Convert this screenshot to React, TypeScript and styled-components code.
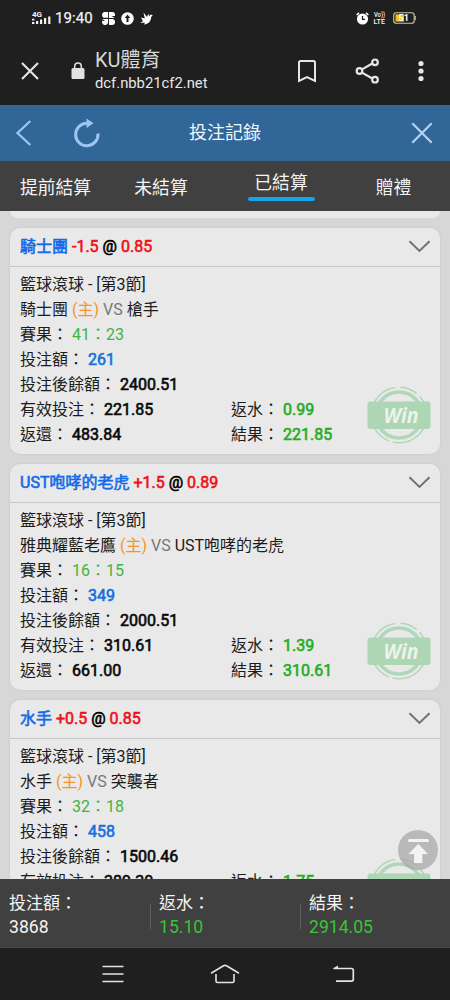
import React from "react";
import styled, { createGlobalStyle } from "styled-components";

const GlobalStyle = createGlobalStyle`
  *, *::before, *::after { box-sizing: border-box; }
  body { margin: 0; background: #1f1f1f; font-family: Roboto, "Noto Sans CJK TC", sans-serif; }
  svg { display: block; flex: none; }
`;

const Screen = styled.div`
  width: 450px;
  height: 1000px;
  display: flex;
  flex-direction: column;
  overflow: hidden;
  background: #1f1f1f;
`;

const StatusBar = styled.div`
  height: 36px;
  display: flex;
  align-items: center;
  padding: 0 33px 0 31px;
  color: #f2f2f2;
`;

const Signal = styled.div`
  width: 21px;
  margin-right: 3px;
`;

const Clock = styled.span`
  font-size: 15px;
  line-height: 18px;
  letter-spacing: 0.1px;
  -webkit-text-stroke: 0.25px #f2f2f2;
  margin-right: 9px;
`;

const StatusIcons = styled.div<{ $gap: number }>`
  display: flex;
  align-items: center;
  gap: ${(p) => p.$gap}px;
`;

const Spacer = styled.div`
  flex: 1;
`;

const BrowserBar = styled.div`
  height: 69px;
  display: flex;
  align-items: center;
  padding: 0 21px;
`;

const LockSlot = styled.div`
  margin-left: 32px;
`;

const Site = styled.div`
  margin-left: 10px;
  flex: 1;
`;

const SiteTitle = styled.div`
  font-size: 20px;
  line-height: 25px;
  color: #d6d6d6;
`;

const SiteHost = styled.div`
  font-size: 14.8px;
  line-height: 20px;
  color: #e6e6e6;
`;

const BrowserActions = styled.div`
  display: grid;
  grid-template-columns: 58px 58px 16px;
  align-items: center;
  column-gap: 0;
  padding-left: 0;
`;

const PageHeader = styled.header`
  height: 56px;
  display: grid;
  grid-template-columns: 115px 1fr 115px;
  align-items: center;
  background: #316698;
`;

const HeaderSide = styled.div<{ $end?: boolean }>`
  display: flex;
  align-items: center;
  gap: 41px;
  justify-content: ${(p) => (p.$end ? "flex-end" : "flex-start")};
  padding: ${(p) => (p.$end ? "0 17px 0 0" : "0 0 0 15px")};
`;

const PageTitle = styled.h1`
  margin: 0;
  font-size: 18px;
  font-weight: 400;
  line-height: 26px;
  text-align: center;
  color: #f1f6fb;
`;

const Tabs = styled.nav`
  height: 50px;
  display: grid;
  grid-template-columns: 111px 100px 140px 85px;
  background: #404040;
`;

const Tab = styled.div<{ $active?: boolean }>`
  display: flex;
  flex-direction: column;
  align-items: center;
  padding-top: ${(p) => (p.$active ? 9 : 14)}px;
  font-size: 17.8px;
  line-height: 26px;
  color: #f4f4f4;

  &::after {
    content: "";
    display: ${(p) => (p.$active ? "block" : "none")};
    width: 67px;
    height: 4px;
    margin-top: 1px;
    border-radius: 2px;
    background: #12a5e8;
  }
`;

const List = styled.main`
  height: 668px;
  position: relative;
  overflow: hidden;
  background: #d7d7d7;
  padding: 0 10px;
`;

const CardTail = styled.div`
  height: 7px;
  margin-bottom: 10px;
  background: #e9e9e9;
  border-radius: 0 0 9px 9px;
`;

const Card = styled.section`
  position: relative;
  height: 226px;
  margin-bottom: 10px;
  background: #e9e9e9;
  border-radius: 10px;
  box-shadow: 0 0 3px rgba(0, 0, 0, 0.07);
`;

const CardHeader = styled.div`
  height: 39px;
  display: flex;
  align-items: center;
  justify-content: space-between;
  padding: 0 9px 1px 10px;
  border-bottom: 1px solid #c8c8c8;
`;

const Pick = styled.div`
  font-size: 16px;
  line-height: 25px;
  color: #000;
  -webkit-text-stroke-width: 0.6px;
`;

const Team = styled.span`
  color: #126be8;
`;

const Red = styled.span`
  color: #f01018;
`;

const CardBody = styled.div`
  padding: 5px 10px;
`;

const Line = styled.div`
  display: grid;
  grid-template-columns: 211px 1fr;
  height: 25px;
  font-size: 16px;
  line-height: 25px;
  white-space: nowrap;
  color: #1c1c1c;
`;

type Tone = "black" | "blue" | "green" | "score" | "home" | "versus";
const tones: Record<Tone, string> = {
  black: "#080808",
  blue: "#176fe0",
  green: "#24ae24",
  score: "#3eb53e",
  home: "#f79422",
  versus: "#777",
};

const Value = styled.span<{ $tone: Tone; $strong?: boolean }>`
  color: ${(p) => tones[p.$tone]};
  -webkit-text-stroke-width: ${(p) => (p.$strong ? "0.6px" : "0")};
`;

const StampSlot = styled.div`
  position: absolute;
  right: 9px;
  bottom: 10px;
`;

const TopButton = styled.div`
  position: absolute;
  right: 12px;
  top: 619px;
  width: 40px;
  height: 40px;
  border-radius: 50%;
  background: rgba(166, 166, 166, 0.72);
`;

const Totals = styled.footer`
  height: 69px;
  display: grid;
  grid-template-columns: repeat(3, 150px);
  background: #404040;
  border-bottom: 1px solid #494949;
`;

const Total = styled.div<{ $green?: boolean }>`
  position: relative;
  padding: 12px 0 0 9px;
  font-size: 17px;
  line-height: 24px;
  color: #f4f4f4;

  & > strong {
    display: block;
    font-weight: 400;
    font-size: 17.6px;
    color: ${(p) => (p.$green ? "#35c735" : "#f4f4f4")};
  }

  &:not(:first-child)::before {
    content: "";
    position: absolute;
    left: 0;
    top: 25px;
    width: 1px;
    height: 25px;
    background: #606060;
  }
`;

const SystemNav = styled.div`
  height: 52px;
  display: flex;
  align-items: center;
  justify-content: space-between;
  padding: 0 95px 0 102px;
`;

const HomeSlot = styled.div`
  margin-right: 6px;
`;

const WinStamp = () => (
  <svg width="64" height="58" viewBox="0 0 64 58">
    <g fill="none" stroke="#b0d8b8">
      <circle cx="32" cy="29" r="23" strokeWidth="3.6" />
      <circle cx="32" cy="29" r="27.8" strokeWidth="1.5" strokeDasharray="58 4 20 3 50 5 18 4" strokeDashoffset="8" />
    </g>
    <rect x="0.5" y="15.5" width="63" height="27.5" rx="3" fill="#acd6b4" />
    <text x="34" y="37" textAnchor="middle" fontFamily="Open Sans, sans-serif" fontWeight="700" fontStyle="italic" fontSize="21.5" fill="#ecf2ec" textLength="35" lengthAdjust="spacingAndGlyphs">
      Win
    </text>
  </svg>
);

interface Bet {
  team: string;
  handicap: string;
  odds: string;
  home: string;
  away: string;
  score: string;
  stake: string;
  balance: string;
  valid: string;
  rebate: string;
  returned: string;
  result: string;
}

const bets: Bet[] = [
  { team: "騎士團", handicap: "-1.5", odds: "0.85", home: "騎士團", away: "槍手", score: "41：23", stake: "261", balance: "2400.51", valid: "221.85", rebate: "0.99", returned: "483.84", result: "221.85" },
  { team: "UST咆哮的老虎", handicap: "+1.5", odds: "0.89", home: "雅典耀藍老鷹", away: "UST咆哮的老虎", score: "16：15", stake: "349", balance: "2000.51", valid: "310.61", rebate: "1.39", returned: "661.00", result: "310.61" },
  { team: "水手", handicap: "+0.5", odds: "0.85", home: "水手", away: "突襲者", score: "32：18", stake: "458", balance: "1500.46", valid: "389.30", rebate: "1.75", returned: "847.30", result: "389.30" },
];

const BetCard = ({ bet }: { bet: Bet }) => (
  <Card>
    <CardHeader>
      <Pick>
        <Team>{bet.team}</Team> <Red>{bet.handicap}</Red> @ <Red>{bet.odds}</Red>
      </Pick>
      <svg width="23" height="13" viewBox="0 0 23 13" fill="none" stroke="#707070" strokeWidth="1.9">
        <path d="M1.5 1.2 11.5 11 21.5 1.2" />
      </svg>
    </CardHeader>
    <CardBody>
      <Line><span>籃球滾球 - [第3節]</span></Line>
      <Line>
        <span>
          {bet.home} <Value $tone="home">(主)</Value> <Value $tone="versus">VS</Value> {bet.away}
        </span>
      </Line>
      <Line><span>賽果： <Value $tone="score">{bet.score}</Value></span></Line>
      <Line><span>投注額： <Value $tone="blue" $strong>{bet.stake}</Value></span></Line>
      <Line><span>投注後餘額： <Value $tone="black" $strong>{bet.balance}</Value></span></Line>
      <Line>
        <span>有效投注： <Value $tone="black" $strong>{bet.valid}</Value></span>
        <span>返水： <Value $tone="green" $strong>{bet.rebate}</Value></span>
      </Line>
      <Line>
        <span>返還： <Value $tone="black" $strong>{bet.returned}</Value></span>
        <span>結果： <Value $tone="green" $strong>{bet.result}</Value></span>
      </Line>
    </CardBody>
    <StampSlot><WinStamp /></StampSlot>
  </Card>
);

export default function App() {
  return (
    <Screen>
      <GlobalStyle />
      <StatusBar>
        <Signal>
          <svg width="21" height="14" viewBox="0 0 21 14" fill="#f2f2f2">
            <text x="1" y="6.3" fontSize="8" fontWeight="700" fontFamily="Roboto">4G</text>
            <path d="M1 7.8h2.4v1.6H1zM1 11h2.4v2H1zM5 10h2.2v3H5zM9 8.5h2.2V13H9zM13 7h2.2v6H13zM17.2 5.5h2.2V13h-2.2z" />
          </svg>
        </Signal>
        <Clock>19:40</Clock>
        <StatusIcons $gap={6}>
          <svg width="13" height="13" viewBox="0 0 13 13" fill="#fff">
            <path d="M3 0h3.1v5.8H3A2.9 2.9 0 0 1 3 0zM7 0h2.8A3 3 0 0 1 13 3v1H9.5l3.2 2H7zM0 7h6.1v3A3 3 0 0 1 0 10V9h3.3zM7 7h3a3 3 0 0 1 0 6H7z" />
          </svg>
          <svg width="13" height="13" viewBox="0 0 13 13">
            <circle cx="6.5" cy="6.5" r="6.3" fill="#fff" />
            <path d="M6.5 2.5 9.3 6H7.5v4h-2V6H3.7z" fill="#1f1f1f" />
          </svg>
          <svg width="13" height="13" viewBox="0 0 13 13" fill="#fff">
            <path d="M3.5.5 7 5 8.3 1.8 9.2 4.2 10.7 2.5 12.8 3.2 11.3 4.8C11 9 8.6 12.4 4 12.4L5 10.8 0 10.7 3 9.2 1 5.5 4.8 6.5z" />
          </svg>
        </StatusIcons>
        <Spacer />
        <StatusIcons $gap={4}>
          <svg width="13" height="13" viewBox="0 0 13 13">
            <circle cx="6.5" cy="7" r="5.6" fill="#fff" />
            <path d="M.6 3 3 .9M12.4 3 10 .9" stroke="#fff" strokeWidth="1.5" />
            <path d="M6.5 4v3.3H9" fill="none" stroke="#1f1f1f" strokeWidth="1.3" />
          </svg>
          <svg width="13" height="14" viewBox="0 0 13 14" fill="#f2f2f2" fontFamily="Roboto" fontWeight="500">
            <text x="1" y="6" fontSize="6.5" textLength="11" lengthAdjust="spacingAndGlyphs">Vo))</text>
            <text x="0.5" y="13" fontSize="8" textLength="11.5" lengthAdjust="spacingAndGlyphs">LTE</text>
          </svg>
          <svg width="27" height="12" viewBox="0 0 27 12">
            <rect x="3.7" y="0.7" width="20.5" height="10.6" rx="2.6" fill="none" stroke="#d0c6a8" strokeWidth="1.1" />
            <rect x="5.5" y="2.4" width="8.5" height="7.2" fill="#f4bd20" />
            <path d="M25.3 4v4" stroke="#d0c6a8" />
            <text x="13.7" y="9.2" textAnchor="middle" fontFamily="Roboto" fontWeight="700" fontSize="9" fill="#fff">51</text>
          </svg>
        </StatusIcons>
      </StatusBar>
      <BrowserBar>
        <svg width="18" height="18" viewBox="0 0 18 18" stroke="#e6e6e6" strokeWidth="2.1">
          <path d="M1 1 17 17M17 1 1 17" />
        </svg>
        <LockSlot>
          <svg width="14" height="18" viewBox="0 0 14 18">
            <rect x="0.5" y="6" width="13" height="11" rx="1.5" fill="#e2e2e2" />
            <path d="M3.7 7V4.4a3.3 3.3 0 0 1 6.6 0V7" fill="none" stroke="#e2e2e2" strokeWidth="1.5" />
          </svg>
        </LockSlot>
        <Site>
          <SiteTitle>KU體育</SiteTitle>
          <SiteHost>dcf.nbb21cf2.net</SiteHost>
        </Site>
        <BrowserActions>
          <svg width="20" height="24" viewBox="0 0 20 24" fill="none" stroke="#e6e6e6" strokeWidth="2">
            <path d="M2 22V3.5A1.5 1.5 0 0 1 3.5 2h13A1.5 1.5 0 0 1 18 3.5V22L10 18.2z" />
          </svg>
          <svg width="26" height="26" viewBox="0 0 26 26" fill="none" stroke="#e6e6e6" strokeWidth="2.2">
            <path d="M7 11.4 17.3 5.5M7 14.6 17.3 20.5" />
            <circle cx="4.5" cy="13" r="2.8" />
            <circle cx="20" cy="4.3" r="2.8" />
            <circle cx="20" cy="21.7" r="2.8" />
          </svg>
          <svg width="16" height="22" viewBox="0 0 16 22" fill="#e6e6e6">
            <circle cx="8" cy="3.5" r="2.6" />
            <circle cx="8" cy="11" r="2.6" />
            <circle cx="8" cy="18.5" r="2.6" />
          </svg>
        </BrowserActions>
      </BrowserBar>
      <PageHeader>
        <HeaderSide>
          <svg width="17" height="28" viewBox="0 0 17 28" fill="none" stroke="#9dc6f1" strokeWidth="2.3">
            <path d="M15.3 2 2.5 14 15.3 26" />
          </svg>
          <svg width="28" height="30" viewBox="0 0 28 30">
            <path d="M25 15.5A11.2 11.2 0 1 1 13.8 5.3" fill="none" stroke="#9dc6f1" strokeWidth="3" />
            <path d="M13.5 0.5 20.5 5.3 13.5 10z" fill="#9dc6f1" />
          </svg>
        </HeaderSide>
        <PageTitle>投注記錄</PageTitle>
        <HeaderSide $end>
          <svg width="22" height="22" viewBox="0 0 22 22" stroke="#b4d2f2" strokeWidth="2.2">
            <path d="M1.3 1.3 20.7 20.7M20.7 1.3 1.3 20.7" />
          </svg>
        </HeaderSide>
      </PageHeader>
      <Tabs>
        <Tab>提前結算</Tab>
        <Tab>未結算</Tab>
        <Tab $active>已結算</Tab>
        <Tab>贈禮</Tab>
      </Tabs>
      <List>
        <CardTail />
        {bets.map((bet) => (
          <BetCard key={bet.team} bet={bet} />
        ))}
        <TopButton>
          <svg width="40" height="40" viewBox="0 0 40 40" fill="#f3f3f3">
            <rect x="10" y="9" width="21" height="3" rx="1.5" />
            <path d="M20.2 14 30 24h-5.7v9h-8.2v-9h-5.7z" />
          </svg>
        </TopButton>
      </List>
      <Totals>
        <Total>投注額：<strong>3868</strong></Total>
        <Total $green>返水：<strong>15.10</strong></Total>
        <Total $green>結果：<strong>2914.05</strong></Total>
      </Totals>
      <SystemNav>
        <svg width="22" height="18" viewBox="0 0 22 18" stroke="#e4e4e4" strokeWidth="1.7">
          <path d="M.5 1.5h21M.5 9h21M.5 16.5h21" />
        </svg>
        <HomeSlot>
          <svg width="30" height="20" viewBox="0 0 30 20" fill="none" stroke="#e4e4e4" strokeWidth="1.6">
            <path d="M1 9.2 13.5 1.8Q15 1 16.5 1.8L29 9.2M6 10v7q0 1.5 1.5 1.5h15q1.5 0 1.5-1.5v-7" />
          </svg>
        </HomeSlot>
        <svg width="23" height="18" viewBox="0 0 23 18" fill="none" stroke="#e4e4e4" strokeWidth="1.7">
          <path d="M2 3.5h17.5q1.8 0 1.8 1.8v9q0 1.8-1.8 1.8H4" />
          <path d="M.5 3.8 6 .5v3.5z" fill="#e4e4e4" stroke="none" />
        </svg>
      </SystemNav>
    </Screen>
  );
}
